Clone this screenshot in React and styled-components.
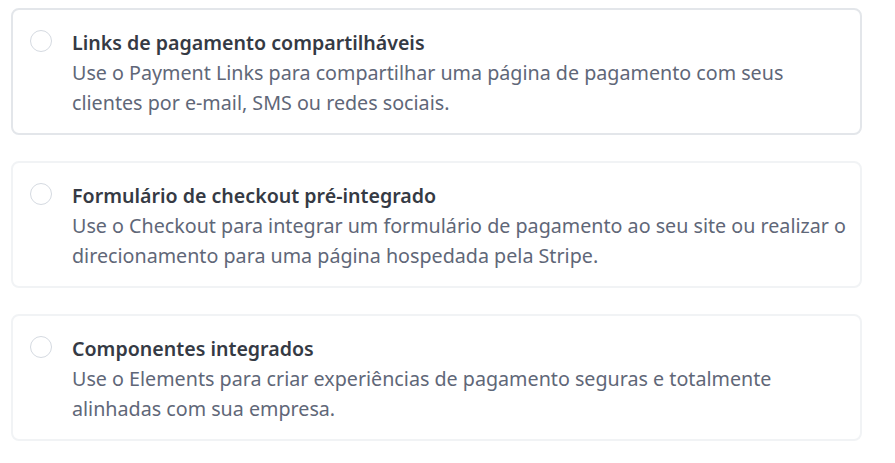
import React from 'react';
import styled, { createGlobalStyle } from 'styled-components';

const GlobalStyle = createGlobalStyle`
    body {
        margin: 0;
        background: #ffffff;
        font-family: 'Noto Sans', 'Open Sans', sans-serif;
    }
`;

const OptionList = styled.div`
    display: grid;
    grid-gap: 26px;
    width: 851px;
    padding: 8px 0 0 11px;
`;

const OptionCard = styled.label`
    display: grid;
    grid-template-columns: 22px 1fr;
    grid-gap: 20px;
    align-items: start;
    padding: 18px 12px 15px 17px;
    border: 2px solid ${ props => props.active ? '#e3e6ea' : '#f1f3f5' };
    border-radius: 8px;
    background: #ffffff;
    cursor: pointer;
`;

const Radio = styled.span`
    display: block;
    box-sizing: border-box;
    width: 22px;
    height: 22px;
    margin-top: 2px;
    border: 1.5px solid #d5dae1;
    border-radius: 50%;
`;

const OptionTitle = styled.span`
    display: block;
    color: #353a44;
    font-size: 19.6px;
    font-weight: 600;
    line-height: 30px;
`;

const OptionText = styled.span`
    display: block;
    color: #5f6778;
    font-size: 19.7px;
    line-height: 30px;
`;

const options = [
    {
        title: 'Links de pagamento compartilháveis',
        text: 'Use o Payment Links para compartilhar uma página de pagamento com seus clientes por e-mail, SMS ou redes sociais.',
    },
    {
        title: 'Formulário de checkout pré-integrado',
        text: 'Use o Checkout para integrar um formulário de pagamento ao seu site ou realizar o direcionamento para uma página hospedada pela Stripe.',
    },
    {
        title: 'Componentes integrados',
        text: 'Use o Elements para criar experiências de pagamento seguras e totalmente alinhadas com sua empresa.',
    },
];

export default function App() {
    return (
        <>
            <GlobalStyle />
            <OptionList>
                { options.map((option, index) =>
                    <OptionCard key={ option.title } active={ index === 0 }>
                        <Radio />
                        <div>
                            <OptionTitle>{ option.title }</OptionTitle>
                            <OptionText>{ option.text }</OptionText>
                        </div>
                    </OptionCard>
                ) }
            </OptionList>
        </>
    );
}
